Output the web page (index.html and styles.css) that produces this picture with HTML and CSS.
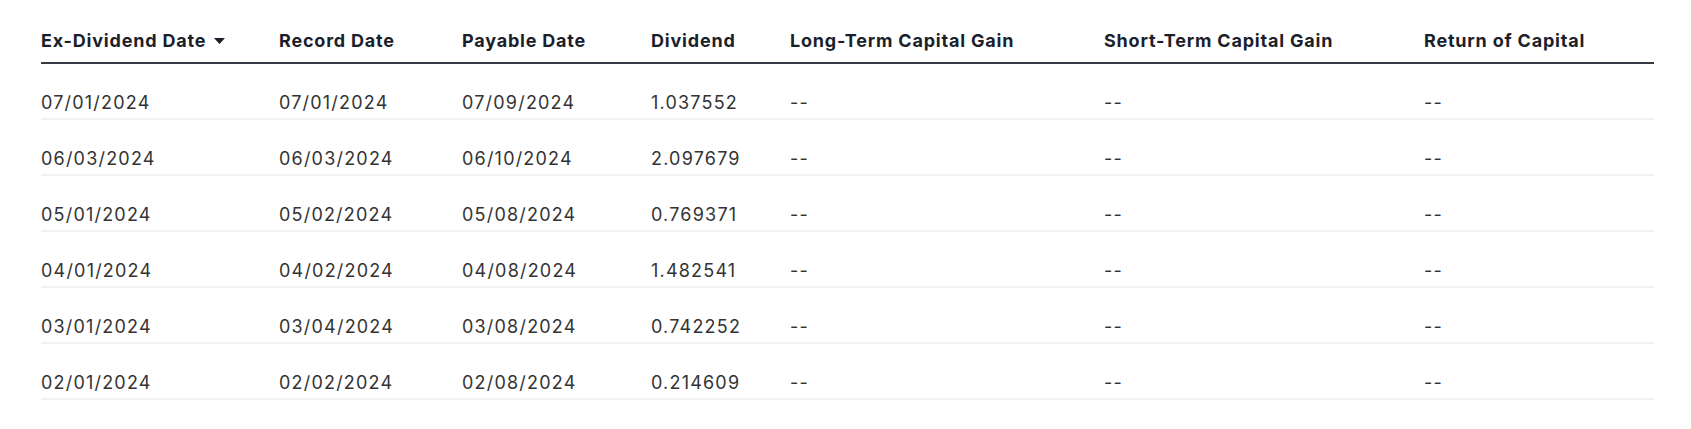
FILE: index.html
```html
<!DOCTYPE html>
<html lang="en">
<head>
<meta charset="utf-8">
<title>Distributions</title>
<link rel="stylesheet" href="styles.css">
</head>
<body>
<div class="wrap">
  <table class="dist">
    <colgroup>
      <col class="c1"><col class="c2"><col class="c3"><col class="c4"><col class="c5"><col class="c6"><col class="c7">
    </colgroup>
    <thead>
      <tr>
        <th>Ex-Dividend Date<svg class="caret" width="11" height="6" viewBox="0 0 11 6"><path d="M0 0h11L5.5 6z"/></svg></th>
        <th>Record Date</th>
        <th>Payable Date</th>
        <th>Dividend</th>
        <th>Long-Term Capital Gain</th>
        <th>Short-Term Capital Gain</th>
        <th>Return of Capital</th>
      </tr>
    </thead>
    <tbody>
      <tr><td>07/01/2024</td><td>07/01/2024</td><td>07/09/2024</td><td>1.037552</td><td>--</td><td>--</td><td>--</td></tr>
      <tr><td>06/03/2024</td><td>06/03/2024</td><td>06/10/2024</td><td>2.097679</td><td>--</td><td>--</td><td>--</td></tr>
      <tr><td>05/01/2024</td><td>05/02/2024</td><td>05/08/2024</td><td>0.769371</td><td>--</td><td>--</td><td>--</td></tr>
      <tr><td>04/01/2024</td><td>04/02/2024</td><td>04/08/2024</td><td>1.482541</td><td>--</td><td>--</td><td>--</td></tr>
      <tr><td>03/01/2024</td><td>03/04/2024</td><td>03/08/2024</td><td>0.742252</td><td>--</td><td>--</td><td>--</td></tr>
      <tr><td>02/01/2024</td><td>02/02/2024</td><td>02/08/2024</td><td>0.214609</td><td>--</td><td>--</td><td>--</td></tr>
    </tbody>
  </table>
</div>
</body>
</html>
```
FILE: styles.css
```css
html, body {
  margin: 0;
  padding: 0;
  background: #ffffff;
}

.wrap {
  padding: 29px 0 0 41px;
}

.dist {
  border-collapse: collapse;
  table-layout: fixed;
  width: 1613px;
  font-family: Inter, "Liberation Sans", sans-serif;
  font-size: 18px;
  line-height: 24px;
}

.c1 { width: 238px; }
.c2 { width: 183px; }
.c3 { width: 189px; }
.c4 { width: 139px; }
.c5 { width: 314px; }
.c6 { width: 320px; }
.c7 { width: 230px; }

.dist th {
  text-align: left;
  font-weight: 700;
  letter-spacing: 0.8px;
  color: #1c1f2b;
  padding: 0 0 9px 0;
  border-bottom: 2px solid #363a44;
  white-space: nowrap;
}

.caret {
  margin-left: 8px;
  vertical-align: 3px;
  fill: #1c1f2b;
}

.dist td {
  color: #333333;
  font-weight: 400;
  letter-spacing: 1.2px;
  padding: 27px 0 3px 0;
  border-bottom: 2px solid #f2f2f2;
  white-space: nowrap;
}
```
